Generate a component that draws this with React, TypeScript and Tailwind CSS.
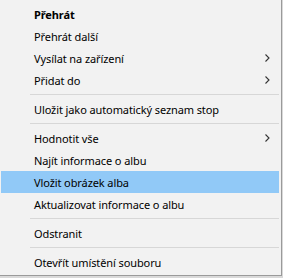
import React from 'react'

type Entry = { label?: string; bold?: boolean; sub?: boolean; active?: boolean; sep?: boolean }

const entries: Entry[] = [
  { label: 'Přehrát', bold: true },
  { label: 'Přehrát další' },
  { label: 'Vysílat na zařízení', sub: true },
  { label: 'Přidat do', sub: true },
  { sep: true },
  { label: 'Uložit jako automatický seznam stop' },
  { sep: true },
  { label: 'Hodnotit vše', sub: true },
  { label: 'Najít informace o albu' },
  { label: 'Vložit obrázek alba', active: true },
  { label: 'Aktualizovat informace o albu' },
  { sep: true },
  { label: 'Odstranit' },
  { sep: true },
  { label: 'Otevřít umístění souboru' },
]

const Chevron = () => (
  <svg width="5" height="8" viewBox="0 0 5 8" className="block">
    <polyline points="0.5,0.5 4,4 0.5,7.5" fill="none" stroke="#333" strokeWidth="1.1" />
  </svg>
)

export default function App() {
  return (
    <div className="w-[283px] h-[278px] bg-[#d9d9d9]">
      <div
        className="w-[282px] h-[276px] bg-[#f2f2f2] border-r border-b border-[#9a9a9a] pt-[3px] flex flex-col text-[11px] tracking-[-0.1px] text-black"
        style={{ fontFamily: '"Noto Sans", "Open Sans", sans-serif' }}
      >
        {entries.map((e, i) =>
          e.sep ? (
            <div key={i} className="h-[7px] flex items-center">
              <div className="ml-[30px] mr-[2px] h-px flex-1 bg-[#d7d7d7]" />
            </div>
          ) : (
            <div
              key={i}
              className={
                'h-[22px] ml-[1px] mr-[2px] pl-[33px] pr-[9px] flex items-center justify-between leading-none ' +
                (e.active ? 'bg-[#91c9f7]' : '')
              }
            >
              <span className={e.bold ? 'font-bold' : ''}>{e.label}</span>
              {e.sub && <Chevron />}
            </div>
          )
        )}
      </div>
    </div>
  )
}
